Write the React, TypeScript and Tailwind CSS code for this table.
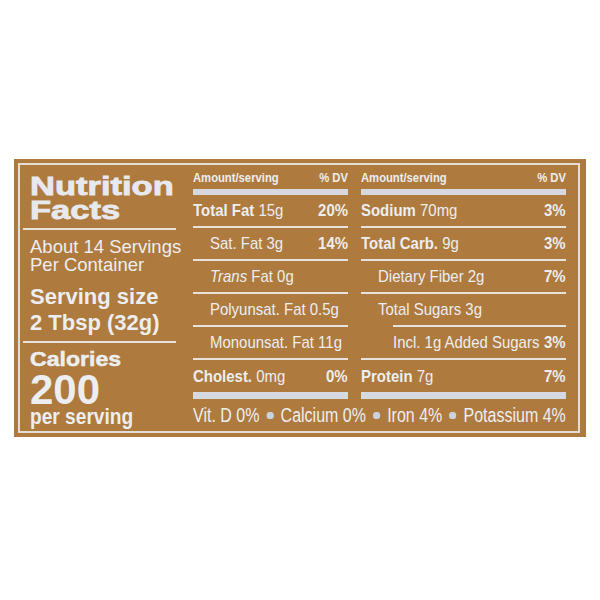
import { Fragment } from "react";
import clsx from "clsx";

type Row = {
  b?: string;
  i?: string;
  t: string;
  dv?: string;
  indent?: 0 | 1 | 2;
  rule: "full" | "indent" | "bar";
};

const fatRows: Row[] = [
  { b: "Total Fat", t: " 15g", dv: "20%", rule: "full" },
  { t: "Sat. Fat 3g", dv: "14%", indent: 1, rule: "full" },
  { i: "Trans", t: " Fat 0g", indent: 1, rule: "full" },
  { t: "Polyunsat. Fat 0.5g", indent: 1, rule: "full" },
  { t: "Monounsat. Fat 11g", indent: 1, rule: "full" },
  { b: "Cholest.", t: " 0mg", dv: "0%", rule: "bar" },
];

const carbRows: Row[] = [
  { b: "Sodium", t: " 70mg", dv: "3%", rule: "full" },
  { b: "Total Carb.", t: " 9g", dv: "3%", rule: "full" },
  { t: "Dietary Fiber 2g", dv: "7%", indent: 1, rule: "full" },
  { t: "Total Sugars 3g", indent: 1, rule: "indent" },
  { t: "Incl. 1g Added Sugars", dv: "3%", indent: 2, rule: "full" },
  { b: "Protein", t: " 7g", dv: "7%", rule: "bar" },
];

function Column({ rows, className }: { rows: Row[]; className: string }) {
  return (
    <div className={clsx("flex flex-col", className)}>
      <div className="flex h-[24px] items-end justify-between pb-[5px] text-[12.5px] font-bold leading-none">
        <span className="inline-block origin-left scale-x-[0.9] whitespace-nowrap">Amount/serving</span>
        <span className="inline-block origin-right scale-x-[0.9] whitespace-nowrap">% DV</span>
      </div>
      <div className="h-[6px] bg-[#d6d9df]" />
      {rows.map((r, n) => (
        <Fragment key={n}>
          <div
            className={clsx(
              "flex items-center text-[17px] leading-none",
              r.rule === "bar" ? "h-[32px]" : "h-[31px]",
              r.indent === 1 && "pl-[17px]",
              r.indent === 2 && "pl-[32px]",
            )}
          >
            <div className="min-w-0 flex-1">
              <span className="inline-block origin-left scale-x-[0.88] whitespace-nowrap">
                {r.b && <b className="font-bold">{r.b}</b>}
                {r.i && <i>{r.i}</i>}
                {r.t}
              </span>
            </div>
            {r.dv && (
              <span className="inline-block shrink-0 origin-right scale-x-[0.88] font-bold">{r.dv}</span>
            )}
          </div>
          {r.rule === "full" && <div className="h-[2px] bg-[#e6e2dc]" />}
          {r.rule === "indent" && <div className="ml-[32px] h-[2px] bg-[#e6e2dc]" />}
          {r.rule === "bar" && <div className="h-[7px] bg-[#d6d9df]" />}
        </Fragment>
      ))}
    </div>
  );
}

function Dot() {
  return <span className="h-[7px] w-[9px] rounded-full bg-[#c9d3e0]" />;
}

export default function App() {
  return (
    <div className="h-[600px] w-[600px] bg-white pl-[14px] pt-[159px] font-['Liberation_Sans',Arial,sans-serif] text-[#eceef1]">
      <div className="h-[278px] w-[572px] overflow-hidden bg-[#ae7a3d] pb-[4px] pl-[4px] pr-[6px] pt-[4px]">
        <div className="flex h-full border-2 border-[#e3ddd4]">
          {/* left: title, servings, calories */}
          <div className="ml-[3px] flex w-[153px] shrink-0 flex-col">
            <div className="mt-[9px] px-[7px] text-[25px] font-bold leading-[24px] text-[#e8e9ee]">
              <div className="origin-left scale-x-[1.38] whitespace-nowrap [-webkit-text-stroke:0.8px_#e8e9ee]">Nutrition</div>
              <div className="origin-left scale-x-[1.38] whitespace-nowrap [-webkit-text-stroke:0.8px_#e8e9ee]">Facts</div>
            </div>
            <div className="mt-[6px] h-[2px] bg-[#e6e2dc]" />
            <div className="mt-[8px] whitespace-nowrap px-[7px] text-[18.5px] leading-[17.5px]">
              About 14 Servings
              <br />
              Per Container
            </div>
            <div className="mt-[11px] whitespace-nowrap px-[7px] text-[22px] font-bold leading-[26px]">
              Serving size
              <br />2 Tbsp (32g)
            </div>
            <div className="mt-[5px] h-[2px] bg-[#e6e2dc]" />
            <div className="mt-[5px] px-[7px] text-[21px] font-bold leading-[21px]">
              <div className="origin-left scale-x-[1.1] whitespace-nowrap [-webkit-text-stroke:0.5px_#eceef1]">Calories</div>
            </div>
            <div className="mt-[5px] px-[7px] text-[42px] font-bold leading-[31px]">200</div>
            <div className="mt-[2px] px-[7px] text-[22px] font-bold leading-[20px]">
              <div className="origin-left scale-x-[0.87] whitespace-nowrap">per serving</div>
            </div>
          </div>

          {/* right: two nutrient tables and vitamins */}
          <div className="ml-[17px] flex w-[373px] shrink-0 flex-col">
            <div className="flex">
              <Column rows={fatRows} className="w-[155px]" />
              <Column rows={carbRows} className="ml-[13px] w-[205px]" />
            </div>
            <div className="flex h-[32px] items-center">
              <div className="flex w-[466px] shrink-0 origin-left scale-x-[0.8] items-center justify-between whitespace-nowrap text-[20px] leading-none">
                <span>Vit. D 0%</span>
                <Dot />
                <span>Calcium 0%</span>
                <Dot />
                <span>Iron 4%</span>
                <Dot />
                <span>Potassium 4%</span>
              </div>
            </div>
          </div>
        </div>
      </div>
    </div>
  );
}
